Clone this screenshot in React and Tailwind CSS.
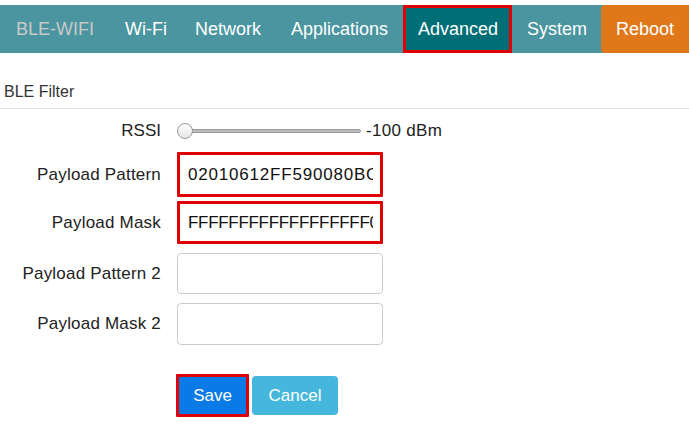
import React from "react";

function Row({ label, children, h }) {
  return (
    <div className={"flex items-center " + h}>
      <div className="w-[161px] text-right text-[17px] tracking-[0.2px] text-[#222] whitespace-nowrap">{label}</div>
      <div className="ml-[16px]">{children}</div>
    </div>
  );
}

function Input({ value, red, h, track }) {
  return (
    <div
      className={
        "w-[206px] bg-white flex items-center text-[17px] text-[#111] " +
        h +
        (red
          ? " border-[3px] border-[#e00000] rounded-[1px] pl-[8px]"
          : " border border-[#ccc] rounded-[4px] pl-[10px]")
      }
    >
      <div className={"w-[185px] overflow-hidden whitespace-nowrap " + (track || "")}>{value}</div>
    </div>
  );
}

export default function App() {
  return (
    <div className="w-[689px] h-[426px] bg-white overflow-hidden" style={{ fontFamily: '"Liberation Sans", Arial, sans-serif' }}>
      <div className="mt-[5px] h-[48px] bg-[#4a959f] flex items-stretch text-[18px] whitespace-nowrap">
        <div className="w-[110px] shrink-0 pl-[16px] flex items-center text-[#c9c9c9]">BLE-WIFI</div>
        <div className="w-[70px] shrink-0 pl-[15px] flex items-center text-white">Wi-Fi</div>
        <div className="w-[96px] shrink-0 pl-[15px] flex items-center text-white">Network</div>
        <div className="w-[127px] shrink-0 pl-[15px] flex items-center text-white">Applications</div>
        <div className="w-[109px] shrink-0 pl-[12px] flex items-center text-white bg-[#006e76] border-[3px] border-[#e00000]">Advanced</div>
        <div className="w-[89px] shrink-0 pl-[15px] flex items-center text-white">System</div>
        <div className="flex-1 pl-[15px] flex items-center text-white bg-[#e0781a] rounded-l-[4px]">Reboot</div>
      </div>
      <div className="pt-[27px] pl-[4px] text-[16px] text-[#333] h-[55px]">BLE Filter</div>
      <div className="border-t border-[#e5e5e5]"></div>
      <div className="flex flex-col">
        <div className="mt-[11px] flex items-center h-[22px]">
          <div className="w-[161px] text-right text-[17px] text-[#222]">RSSI</div>
          <div className="ml-[16px] relative w-[184px] h-[16px] flex items-center">
            <div className="absolute left-[8px] right-0 h-[4px] rounded-[2px] bg-[#bdbdbd] border border-[#9a9a9a]"></div>
            <div className="absolute left-0 w-[16px] h-[16px] rounded-full border border-[#9a9a9a] bg-gradient-to-b from-white to-[#e6e6e6]"></div>
          </div>
          <div className="ml-[5px] text-[17px] tracking-[0.3px] text-[#222]">-100 dBm</div>
        </div>
        <div className="mt-[10px] flex flex-col">
          <Row label="Payload Pattern" h="h-[45px]"><Input value="02010612FF590080BC" red h="h-[45px]" track="tracking-[0.8px]" /></Row>
          <div className="mt-[4px]">
            <Row label="Payload Mask" h="h-[43px]"><Input value="FFFFFFFFFFFFFFFFFF00" red h="h-[43px]" track="tracking-[-0.3px]" /></Row>
          </div>
          <div className="mt-[9px]">
            <Row label="Payload Pattern 2" h="h-[41px]"><Input value="" h="h-[41px]" /></Row>
          </div>
          <div className="mt-[9px]">
            <Row label="Payload Mask 2" h="h-[42px]"><Input value="" h="h-[42px]" /></Row>
          </div>
        </div>
        <div className="mt-[29px] ml-[176px] flex items-center gap-[3px]">
          <div className="w-[73px] h-[43px] flex items-center justify-center text-white text-[17px] bg-[#0a7be6] border-[3px] border-[#e00000] rounded-[1px]">Save</div>
          <div className="w-[86px] h-[39px] flex items-center justify-center text-white text-[17px] bg-[#45b7dc] rounded-[4px]">Cancel</div>
        </div>
      </div>
    </div>
  );
}
